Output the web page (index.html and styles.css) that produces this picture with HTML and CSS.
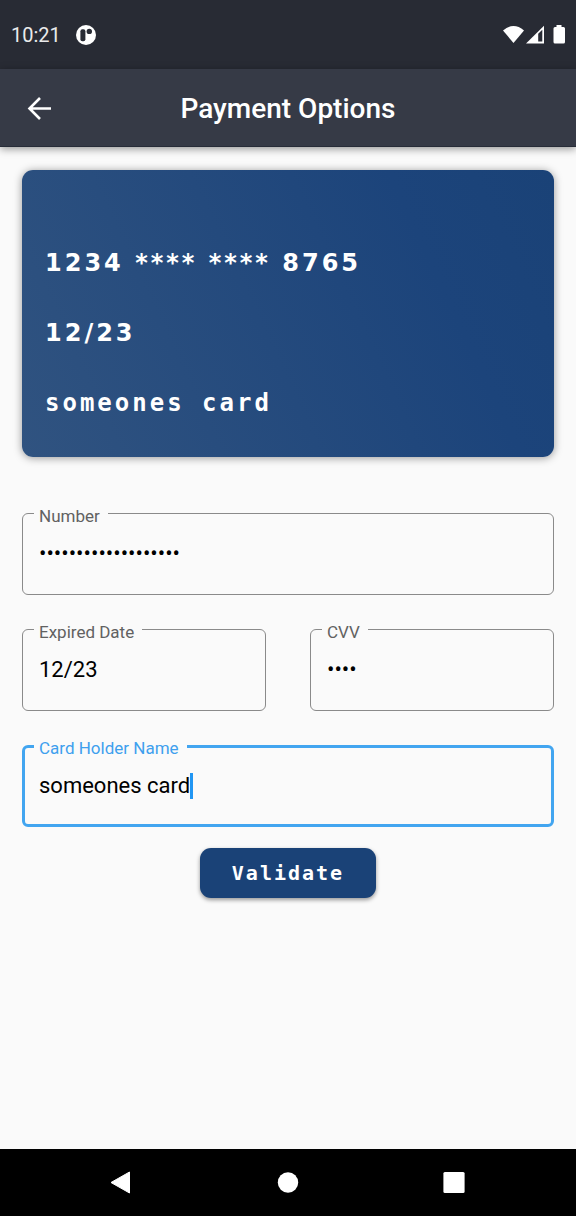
FILE: index.html
```html
<!DOCTYPE html>
<html lang="en">
<head>
<meta charset="utf-8">
<meta name="viewport" content="width=device-width, initial-scale=1">
<title>Payment Options</title>
<link rel="stylesheet" href="styles.css">
</head>
<body>
<div class="status-bar">
  <span class="clock">10:21</span>
  <svg class="notice" width="20" height="20" viewBox="0 0 20 20" aria-hidden="true">
    <circle cx="10" cy="10" r="10" fill="#fff"/>
    <rect x="4.400" y="4.200" width="5" height="12" rx="2" fill="#282b34"/>
    <circle cx="13.300" cy="6.400" r="2.700" fill="#282b34"/>
  </svg>
  <svg class="signals" width="62" height="20" viewBox="0 0 62 20" aria-hidden="true">
    <path d="M0 5.400Q10.500-3.400 21 5.400L10.500 18Z" fill="#fff"/>
    <path d="M23 18.500 41 .800V18.500Z" fill="#fff"/>
    <path d="M35.200 8.700 39.300 4.700V16.500H35.200Z" fill="#282b34"/>
    <path d="M53.500 0h5v2h2q1.500 0 1.500 1.500V17q0 1.500-1.500 1.500h-8.500q-1.500 0-1.500-1.500V3.500Q50.500 2 52 2h1.500Z" fill="#fff"/>
  </svg>
</div>
<header class="app-bar">
  <button class="back" type="button" aria-label="Back">
    <svg width="24" height="24" viewBox="0 0 24 24" aria-hidden="true"><path d="M13 1 2.500 11.500 13 22M2.500 11.500H24" fill="none" stroke="#fff" stroke-width="2.600"/></svg>
  </button>
  <h1 class="title">Payment Options</h1>
</header>
<main class="content">
  <section class="card" aria-label="Card preview">
    <p class="card-line">1234 **** **** 8765</p>
    <p class="card-line">12/23</p>
    <p class="card-line card-name">someones card</p>
  </section>
  <form class="form">
    <div class="field">
      <label class="label" for="number">Number</label>
      <div class="control"><input class="input" id="number" type="password" value="1234567812348765123" autocomplete="off"></div>
    </div>
    <div class="row">
      <div class="field">
        <label class="label" for="expiry">Expired Date</label>
        <div class="control"><input class="input" id="expiry" type="text" value="12/23"></div>
      </div>
      <div class="field">
        <label class="label" for="cvv">CVV</label>
        <div class="control"><input class="input" id="cvv" type="password" value="1234" autocomplete="off"></div>
      </div>
    </div>
    <div class="field active">
      <label class="label" for="holder">Card Holder Name</label>
      <div class="control"><input class="input" id="holder" type="text" value="someones card"><span class="caret"></span></div>
    </div>
    <button class="validate" type="button">Validate</button>
  </form>
</main>
<nav class="nav-bar" aria-label="System">
  <button class="nav-button" type="button" aria-label="Back">
    <svg width="24" height="24" viewBox="0 0 24 24" aria-hidden="true"><path d="M1 12.500 19.500 2v21Z" fill="#fff" stroke="#fff" stroke-linejoin="round"/></svg>
  </button>
  <button class="nav-button" type="button" aria-label="Home">
    <svg width="24" height="24" viewBox="0 0 24 24" aria-hidden="true"><circle cx="12" cy="12.500" r="10.200" fill="#fff"/></svg>
  </button>
  <button class="nav-button" type="button" aria-label="Recent apps">
    <svg width="24" height="24" viewBox="0 0 24 24" aria-hidden="true"><rect x="1.400" y="2" width="21.200" height="21" rx="1.500" fill="#fff"/></svg>
  </button>
</nav>
</body>
</html>
```

FILE: styles.css
```css
* {
  box-sizing: border-box;
}

body {
  margin: 0;
  min-height: 100vh;
  display: flex;
  flex-direction: column;
  background: #fafafa;
  color: #000;
  font-family: Roboto, "Liberation Sans", sans-serif;
}

button {
  border: 0;
  padding: 0;
  background: none;
  font: inherit;
}

svg {
  display: block;
}

.status-bar {
  display: flex;
  align-items: center;
  padding: 24px 11px;
  background: #282b34;
  color: #e9eaeb;
}

.clock {
  padding-top: 2px;
  font-size: 20px;
  line-height: 19px;
}

.notice {
  margin-left: 15px;
}

.signals {
  margin-left: auto;
}

.app-bar {
  display: grid;
  grid-template-columns: 32px 1fr 32px;
  align-items: center;
  padding: 20px 24px 18px;
  background: #363a46;
  border-bottom: 1px solid #272c38;
  box-shadow: 0 2px 8px rgba(0, 0, 0, 0.4);
}

.back {
  padding-left: 3px;
}

.title {
  margin: 0;
  color: #fff;
  font-size: 28px;
  font-weight: 500;
  line-height: 39px;
  text-align: center;
}

.content {
  flex: 1;
  padding: 23px 22px;
}

.card {
  display: flex;
  flex-direction: column;
  gap: 38px;
  padding: 77px 23px 38px;
  border-radius: 11px;
  background: linear-gradient(65deg, #305380, #1c447b 75%, #1a4277);
  box-shadow: 0 1px 8px rgba(0, 0, 0, 0.4);
  color: #fff;
}

.card-line {
  margin: 0;
  font-family: "DejaVu Sans", sans-serif;
  font-size: 24px;
  font-weight: 700;
  line-height: 32px;
  letter-spacing: 3px;
}

.card-name {
  font-family: "DejaVu Sans Mono", monospace;
}

.form {
  display: flex;
  flex-direction: column;
  gap: 34px;
  padding-top: 56px;
}

.row {
  display: grid;
  grid-template-columns: repeat(2, minmax(0, 1fr));
  gap: 44px;
}

.field {
  position: relative;
}

.label {
  position: absolute;
  top: -7px;
  left: 12px;
  padding: 0 8px 0 5px;
  background: #fafafa;
  color: #616161;
  font-size: 17px;
  line-height: 20px;
}

.control {
  display: flex;
  align-items: center;
  padding: 25px 16px;
  border: 1px solid #8a8a8a;
  border-radius: 6px;
}

.input {
  flex: 1;
  min-width: 0;
  padding: 0;
  border: 0;
  outline: 0;
  background: transparent;
  color: #000;
  font-family: Roboto, "Liberation Sans", sans-serif;
  font-size: 22px;
  line-height: 30px;
  height: 30px;
}

.active .label {
  color: #3ea0ee;
}

.active .control {
  padding: 23px 14px;
  border: 3px solid #42a5f0;
}

.active .input {
  flex: none;
  field-sizing: content;
}

.caret {
  width: 3px;
  height: 26px;
  background: #2196f3;
}

.validate {
  align-self: center;
  margin-top: -13px;
  padding: 10px 32px;
  border-radius: 11px;
  background: #1a4277;
  box-shadow: 0 2px 4px rgba(0, 0, 0, 0.4);
  color: #fff;
  font-family: "DejaVu Sans Mono", monospace;
  font-size: 20px;
  font-weight: 700;
  line-height: 30px;
  letter-spacing: 2px;
}

.nav-bar {
  display: flex;
  justify-content: center;
  gap: 142px;
  padding: 21px 0 22px;
  background: #000;
}
```
